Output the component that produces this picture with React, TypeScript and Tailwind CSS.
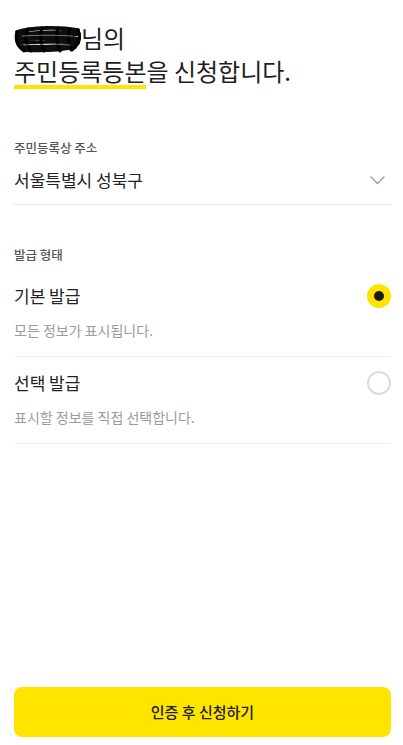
import { useState } from "react";

const options = [
  { id: "basic", title: "기본 발급", desc: "모든 정보가 표시됩니다." },
  { id: "select", title: "선택 발급", desc: "표시할 정보를 직접 선택합니다." },
];

// hand-drawn scribble hiding the user's name
const Scribble = () => (
  <svg width="67" height="27" viewBox="0 0 67 27" fill="none" className="shrink-0 mt-[3px]">
    <path
      d="M3 6 C 18 1, 46 1, 64 4 C 48 7, 20 6, 4 9 C 22 8, 50 7, 65 8 C 48 11, 18 11, 3 13 C 22 12, 50 11, 65 13 C 48 16, 18 16, 4 17 C 22 16, 50 15, 64 17 C 48 20, 22 21, 7 21 C 26 21, 48 20, 61 21 C 46 24, 26 25, 11 24"
      stroke="#0d0d0d"
      strokeWidth="3.8"
      strokeLinecap="round"
      strokeLinejoin="round"
    />
    <path
      d="M3 6 C 1 13, 3 20, 10 25 M64 4 C 67 11, 66 18, 58 24 M14 3 C 10 10, 12 18, 17 25 M28 2 C 25 10, 27 18, 30 25 M44 2 C 41 10, 43 18, 46 25 M56 3 C 53 10, 55 18, 57 24"
      stroke="#000"
      strokeWidth="3"
      strokeLinecap="round"
    />
    <path d="M8 10 C 24 9, 42 9, 58 10 M10 19 C 26 18, 42 18, 56 19" stroke="#fff" strokeWidth="0.8" strokeLinecap="round" opacity="0.55" />
  </svg>
);

const Chevron = () => (
  <svg width="15" height="9" viewBox="0 0 15 9" fill="none">
    <path d="M1 1 L7.5 7.5 L14 1" stroke="#9a9a9a" strokeWidth="1.3" strokeLinecap="round" strokeLinejoin="round" />
  </svg>
);

export default function App() {
  const [picked, setPicked] = useState("basic");

  return (
    <div className="min-h-screen flex flex-col bg-white pl-[14px] pr-[12px] font-['Noto_Sans_CJK_KR',sans-serif] text-[#1e1e1e]">
      {/* HEADER */}
      <div className="pt-[21px] text-[24px] leading-[33px]">
        <div className="flex items-center h-[33px]">
          <Scribble />
          <span>님의</span>
        </div>
        <div>
          <span className="relative isolate">
            주민등록등본
            <span className="absolute left-0 right-0 bottom-[-1px] h-[4px] bg-[#ffe400] -z-10" />
          </span>
          을 신청합니다.
        </div>
      </div>

      {/* ADDRESS */}
      <div className="mt-[53px] text-[12.5px] leading-[16px] font-medium text-[#555]">주민등록상 주소</div>
      <div className="mt-[12px] pb-[12px] border-b border-[#e6e6e6]">
        <div className="flex items-center justify-between h-[24px]">
          <span className="text-[17px] leading-[24px] text-[#222]">서울특별시 성북구</span>
          <span className="mr-[6px] flex items-center">
            <Chevron />
          </span>
        </div>
      </div>

      {/* ISSUE TYPE */}
      <div className="mt-[42px] text-[12.5px] leading-[16px] font-medium text-[#555]">발급 형태</div>
      <div className="mt-[7px]">
        {options.map((o) => (
          <div
            key={o.id}
            onClick={() => setPicked(o.id)}
            className="pt-[14px] pb-[16px] border-b border-[#f0f0f0] cursor-pointer"
          >
            <div className="flex items-center justify-between h-[24px]">
              <span className="text-[17px] leading-[24px] text-[#222]">{o.title}</span>
              {picked === o.id ? (
                <span className="w-[24px] h-[24px] rounded-full bg-[#ffe400] flex items-center justify-center">
                  <span className="w-[10px] h-[10px] rounded-full bg-[#1a1a1a]" />
                </span>
              ) : (
                <span className="w-[24px] h-[24px] rounded-full border-2 border-[#dcdcdc]" />
              )}
            </div>
            <div className="mt-[12px] text-[14px] leading-[20px] text-[#9b9b9b]">{o.desc}</div>
          </div>
        ))}
      </div>

      {/* CTA */}
      <div className="mt-auto pb-[8px]">
        <button className="w-full h-[50px] rounded-[8px] bg-[#ffe400] text-[15px] text-[#222] font-medium">
          인증 후 신청하기
        </button>
      </div>
    </div>
  );
}
